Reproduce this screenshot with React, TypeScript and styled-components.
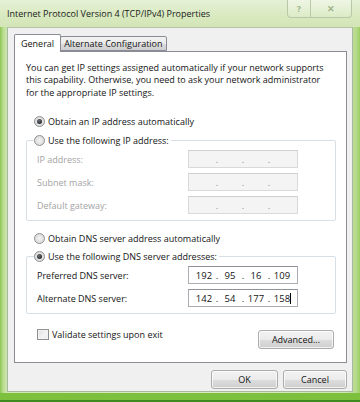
import React from "react";
import styled, { createGlobalStyle } from "styled-components";

const GlobalStyle = createGlobalStyle`
  body {
    margin: 0;
    background: #ffffff;
    font-family: "Open Sans", "Noto Sans", sans-serif;
    font-size: 9px;
    color: #141414;
  }
`;

const Window = styled.div`
  width: 360px;
  height: 402px;
  box-sizing: border-box;
  display: flex;
  flex-direction: column;
  padding: 0 7px 8px 7px;
  background: linear-gradient(90deg, #8cc452 0px, #b9dc8e 3px, #cfe6b0 7px, #dcebc6 50%, #d1e6b2 96%, #b4d98a 99%, #9ccd62 100%);
  border-bottom: 2px solid #3f8a1e;
  box-shadow: inset 0 -7px 0 #7cc03d;
`;

const TitleBar = styled.div`
  height: 27px;
  display: flex;
  align-items: flex-start;
  justify-content: space-between;
  margin: 0 -7px;
  padding: 0 8px 0 7px;
  background: linear-gradient(180deg, #e6f0d6 0%, #d8e9bf 60%, #d3e5b7 100%);
`;

const Title = styled.div`
  margin-top: 8px;
  font-size: 9px;
  color: #1a1a1a;
  line-height: 12px;
`;

const Caption = styled.div`
  display: flex;
  height: 17px;
  border: 1px solid #b9c9a8;
  border-top: none;
  border-radius: 0 0 4px 4px;
  overflow: hidden;
  background: linear-gradient(180deg, rgba(255, 255, 255, 0.35), rgba(255, 255, 255, 0.1));
`;

const CaptionButton = styled.div<{ $w: number }>`
  width: ${(p) => p.$w}px;
  display: flex;
  align-items: center;
  justify-content: center;
  color: #9fb48a;
  font-size: 9px;
  font-weight: bold;
  & + & {
    border-left: 1px solid #b9c9a8;
  }
`;

const Client = styled.div`
  flex: 1;
  display: flex;
  flex-direction: column;
  background: #f0f0f0;
  padding: 6px 5px 0 6px;
  border: 1px solid #a7b8a0;
  border-top-color: #b5c3aa;
`;

const TabStrip = styled.div`
  display: flex;
  align-items: flex-end;
  height: 17px;
  position: relative;
  z-index: 1;
`;

const Tab = styled.div<{ $active?: boolean }>`
  box-sizing: border-box;
  height: ${(p) => (p.$active ? 18 : 15)}px;
  margin-bottom: ${(p) => (p.$active ? -1 : 0)}px;
  padding: 0 ${(p) => (p.$active ? 6 : 3)}px;
  display: flex;
  align-items: center;
  border: 1px solid #898c95;
  border-bottom: ${(p) => (p.$active ? "none" : "1px solid #898c95")};
  background: ${(p) =>
    p.$active ? "#ffffff" : "linear-gradient(180deg, #f2f2f2 0%, #ebebeb 50%, #dddddd 51%, #cfcfcf 100%)"};
  border-radius: 2px 2px 0 0;
  margin-left: ${(p) => (p.$active ? 0 : -1)}px;
  line-height: 12px;
`;

const Panel = styled.div`
  box-sizing: border-box;
  height: 312px;
  background: #ffffff;
  border: 1px solid #898c95;
  padding: 10px 12px 0 11px;
  display: flex;
  flex-direction: column;
`;

const Paragraph = styled.div`
  line-height: 12.4px;
`;

const Choice = styled.label<{ $mt?: number; $indent?: number }>`
  display: flex;
  align-items: center;
  gap: 3px;
  height: 13px;
  line-height: 13px;
  margin-top: ${(p) => p.$mt ?? 0}px;
  margin-left: ${(p) => p.$indent ?? 0}px;
`;

const Radio = styled.span<{ $on?: boolean }>`
  box-sizing: border-box;
  width: 11px;
  height: 11px;
  border-radius: 50%;
  border: 1px solid #8e8f8f;
  background: radial-gradient(circle at 50% 50%, #f4f4f4 0%, #dcdcdc 70%, #c9c9c9 100%);
  display: flex;
  align-items: center;
  justify-content: center;
  &::after {
    content: "";
    display: ${(p) => (p.$on ? "block" : "none")};
    width: 5px;
    height: 5px;
    border-radius: 50%;
    background: radial-gradient(circle at 40% 35%, #6a6f75 0%, #2b2f33 70%, #1c1e20 100%);
  }
`;

const Check = styled.span`
  box-sizing: border-box;
  width: 12px;
  height: 11px;
  border: 1px solid #8e8f8f;
  background: linear-gradient(135deg, #dedede 0%, #f4f4f4 60%, #e6e6e6 100%);
  box-shadow: inset 0 0 0 1px #f4f4f4;
`;

const Group = styled.fieldset<{ $mt: number }>`
  margin: ${(p) => p.$mt}px 0 0 0;
  padding: 3px 0 6px 10px;
  border: 1px solid #d5dfe5;
  border-radius: 2px;
  min-width: 0;
  width: 310px;
  box-sizing: border-box;
`;

const Legend = styled.legend`
  margin-left: -3px;
  padding: 0 2px 0 0;
  height: 13px;
`;

const Rows = styled.div<{ $gap: number }>`
  display: flex;
  flex-direction: column;
  gap: ${(p) => p.$gap}px;
`;

const FieldRow = styled.div<{ $disabled?: boolean }>`
  display: grid;
  grid-template-columns: 151px 110px;
  align-items: center;
  height: 18px;
  color: ${(p) => (p.$disabled ? "#a3a3a3" : "#141414")};
`;

const IpBox = styled.div<{ $disabled?: boolean }>`
  box-sizing: border-box;
  height: 18px;
  display: grid;
  grid-template-columns: 22px 4px 22px 4px 22px 4px 22px;
  padding-left: 4px;
  align-items: center;
  border: 1px solid ${(p) => (p.$disabled ? "#d9d9d9" : "#abadb3")};
  border-top-color: ${(p) => (p.$disabled ? "#cfcfcf" : "#8f929b")};
  background: ${(p) => (p.$disabled ? "#f4f4f4" : "#ffffff")};
  color: ${(p) => (p.$disabled ? "#8d8d8d" : "#141414")};
  font-size: 9.5px;
`;

const Octet = styled.span`
  text-align: center;
  position: relative;
  & > i {
    position: absolute;
    width: 1px;
    height: 11px;
    top: 1px;
    right: 2px;
    background: #000;
  }
`;

const Dot = styled.span`
  text-align: center;
`;

const BottomRow = styled.div`
  display: flex;
  justify-content: space-between;
  align-items: flex-start;
  margin-top: 14px;
  padding-left: 11px;
`;

const Button = styled.div<{ $w: number; $mt?: number }>`
  box-sizing: border-box;
  width: ${(p) => p.$w}px;
  height: 19px;
  margin-top: ${(p) => p.$mt ?? 0}px;
  display: flex;
  align-items: center;
  justify-content: center;
  border: 1px solid #acacac;
  border-radius: 3px;
  background: linear-gradient(180deg, #f2f2f2 0%, #ebebeb 50%, #dddddd 51%, #cfcfcf 100%);
  box-shadow: inset 0 0 0 1px rgba(255, 255, 255, 0.7);
`;

const DialogButtons = styled.div`
  display: flex;
  justify-content: flex-end;
  gap: 5px;
  margin-top: 7px;
`;

function IpField({ value, disabled, caret }: { value?: string[]; disabled?: boolean; caret?: boolean }) {
  const parts = value ?? ["", "", "", ""];
  return (
    <IpBox $disabled={disabled}>
      {parts.map((p, i) => (
        <React.Fragment key={i}>
          <Octet>
            {p}
            {caret && i === 3 ? <i /> : null}
          </Octet>
          {i < 3 ? <Dot>.</Dot> : null}
        </React.Fragment>
      ))}
    </IpBox>
  );
}

export default function App() {
  return (
    <Window>
      <GlobalStyle />
      <TitleBar>
        <Title>Internet Protocol Version 4 (TCP/IPv4) Properties</Title>
        <Caption>
          <CaptionButton $w={22}>?</CaptionButton>
          <CaptionButton $w={40}>✕</CaptionButton>
        </Caption>
      </TitleBar>
      <Client>
        <TabStrip>
          <Tab $active>General</Tab>
          <Tab>Alternate Configuration</Tab>
        </TabStrip>
        <Panel>
          <Paragraph>
            You can get IP settings assigned automatically if your network supports
            <br />
            this capability. Otherwise, you need to ask your network administrator
            <br />
            for the appropriate IP settings.
          </Paragraph>
          <Choice $mt={16} $indent={8}>
            <Radio $on />
            Obtain an IP address automatically
          </Choice>
          <Group $mt={6}>
            <Legend>
              <Choice>
                <Radio />
                Use the following IP address:
              </Choice>
            </Legend>
            <Rows $gap={5}>
              <FieldRow $disabled>
                <span>IP address:</span>
                <IpField disabled />
              </FieldRow>
              <FieldRow $disabled>
                <span>Subnet mask:</span>
                <IpField disabled />
              </FieldRow>
              <FieldRow $disabled>
                <span>Default gateway:</span>
                <IpField disabled />
              </FieldRow>
            </Rows>
          </Group>
          <Choice $mt={11} $indent={8}>
            <Radio />
            Obtain DNS server address automatically
          </Choice>
          <Group $mt={5}>
            <Legend>
              <Choice>
                <Radio $on />
                Use the following DNS server addresses:
              </Choice>
            </Legend>
            <Rows $gap={5}>
              <FieldRow>
                <span>Preferred DNS server:</span>
                <IpField value={["192", "95", "16", "109"]} />
              </FieldRow>
              <FieldRow>
                <span>Alternate DNS server:</span>
                <IpField value={["142", "54", "177", "158"]} caret />
              </FieldRow>
            </Rows>
          </Group>
          <BottomRow>
            <Choice>
              <Check />
              Validate settings upon exit
            </Choice>
            <Button $w={76} $mt={2}>
              Advanced...
            </Button>
          </BottomRow>
        </Panel>
        <DialogButtons>
          <Button $w={67}>OK</Button>
          <Button $w={64}>Cancel</Button>
        </DialogButtons>
      </Client>
    </Window>
  );
}
